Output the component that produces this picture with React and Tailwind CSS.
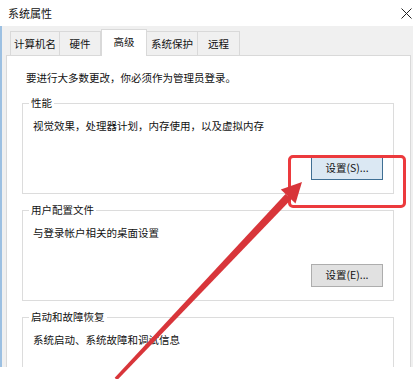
import React from "react";

const tabs = [
  { label: "计算机名", w: "w-[50px]" },
  { label: "硬件", w: "w-[41px]" },
  { label: "高级", w: "w-[46px]", active: true },
  { label: "系统保护", w: "w-[51px]" },
  { label: "远程", w: "w-[42px]" },
];

function Group({ title, desc, button, focused, last }) {
  return (
    <fieldset
      className={`ml-[15px] w-[372px] border border-[#dcdcdc] ${last ? "pb-[60px]" : "pb-[13px]"}`}
    >
      <legend className="ml-[6px] px-[2px] leading-[14px]">{title}</legend>
      <p className="ml-[10px] mt-[9px] leading-[14px]">{desc}</p>
      {button && (
        <div className="flex justify-end pr-[10px] mt-[24px]">
          <button
            className={`w-[72px] h-[23px] text-[10.5px] leading-none border ${
              focused
                ? "bg-[#dbe8f3] border-[#3f6f94]"
                : "bg-[#e1e1e1] border-[#adadad]"
            }`}
          >
            {button}
          </button>
        </div>
      )}
    </fieldset>
  );
}

export default function App() {
  return (
    <div
      className="relative w-[413px] h-[379px] bg-white overflow-hidden text-[10.5px] text-[#111]"
      style={{ fontFamily: '"Noto Sans CJK SC", "Noto Sans", sans-serif' }}
    >
      <div className="h-[367px] flex flex-col overflow-hidden">
        {/* title bar */}
        <div className="h-[26px] flex items-center justify-between pl-[8px] pr-[1px] shrink-0">
          <span className="text-[11px]">系统属性</span>
          <svg width="11" height="11" viewBox="0 0 11 11" className="mt-[1px]">
            <path d="M0.5 0.5 L10.5 10.5 M10.5 0.5 L0.5 10.5" stroke="#222" strokeWidth="1" />
          </svg>
        </div>

        <div className="flex-1 flex flex-col bg-[#f0f0f0] border-l-2 border-[#9cc0e2] pr-[2px]">
          {/* tabs */}
          <div className="h-[29px] flex items-end pl-[8px] shrink-0">
            {tabs.map((t) =>
              t.active ? (
                <div
                  key={t.label}
                  className={`${t.w} h-[27px] -mb-px relative z-10 bg-white border border-b-0 border-[#d9d9d9] flex items-center justify-center pb-[2px]`}
                >
                  {t.label}
                </div>
              ) : (
                <div
                  key={t.label}
                  className={`${t.w} h-[24px] bg-[#f0f0f0] border border-b-0 border-l-0 first:border-l border-[#d9d9d9] flex items-center justify-center`}
                >
                  {t.label}
                </div>
              )
            )}
          </div>

          {/* panel */}
          <div className="flex-1 ml-[4px] bg-white border border-[#d9d9d9] border-b-0">
            <p className="ml-[19px] mt-[15px] leading-[14px]">
              要进行大多数更改，你必须作为管理员登录。
            </p>
            <div className="mt-[11px]">
              <Group
                title="性能"
                desc="视觉效果，处理器计划，内存使用，以及虚拟内存"
                button="设置(S)..."
                focused
              />
            </div>
            <div className="mt-[9px]">
              <Group
                title="用户配置文件"
                desc="与登录帐户相关的桌面设置"
                button="设置(E)..."
              />
            </div>
            <div className="mt-[9px]">
              <Group title="启动和故障恢复" desc="系统启动、系统故障和调试信息" last />
            </div>
          </div>
        </div>
      </div>

      {/* red highlight box */}
      <div className="absolute left-[288px] top-[155px] w-[118px] h-[53px] border-[3px] border-[#ec3a3d] rounded-[5px]" />

      {/* red arrow */}
      <svg className="absolute inset-0 pointer-events-none" width="413" height="379">
        <polygon
          points="117.1,380.2 114.7,377.8 285.5,193.9 291.3,199.3"
          fill="#d8353a"
        />
        <polygon points="302,182 280.8,189.5 295.5,203.5" fill="#d8353a" />
      </svg>
    </div>
  );
}
